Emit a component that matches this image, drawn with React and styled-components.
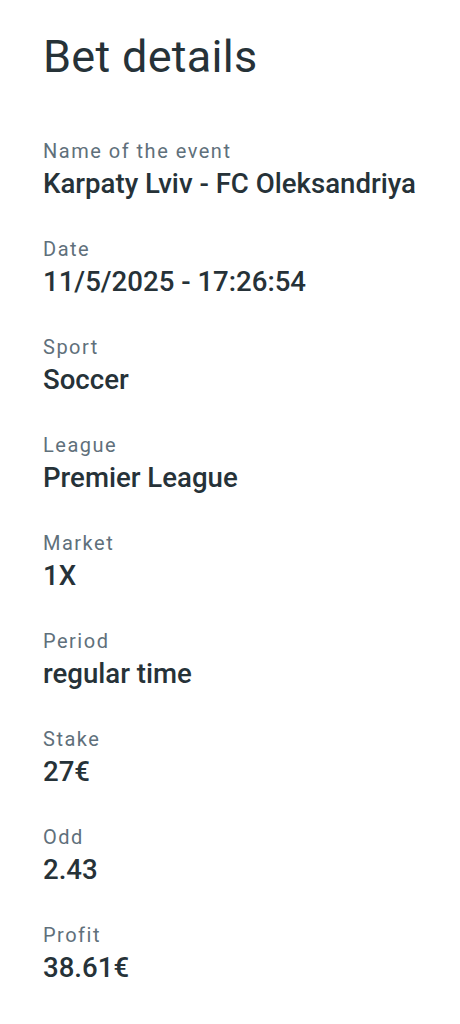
import styled, { createGlobalStyle } from 'styled-components'

const Global = createGlobalStyle`
    body {
        margin: 0;
        background: #fff;
        font-family: Roboto, "Noto Sans", sans-serif;
    }
`;

const Page = styled.main`
    padding: 30px 20px 40px 43px;
`;

const Title = styled.h1`
    margin: 0 0 55px;
    font-size: 45px;
    font-weight: 400;
    line-height: 54px;
    letter-spacing: 0.3px;
    color: #263238;
`;

const List = styled.dl`
    margin: 0;
    display: flex;
    flex-direction: column;
    gap: 32px;
`;

const Item = styled.div`
    display: flex;
    flex-direction: column;
`;

const Label = styled.dt`
    font-size: 20px;
    line-height: 24px;
    letter-spacing: 1.5px;
    color: #5f707b;
`;

const Value = styled.dd`
    margin: 0;
    font-size: 27.6px;
    font-weight: 500;
    line-height: 42px;
    white-space: nowrap;
    color: #263238;
`;

const details = [
    ['Name of the event', 'Karpaty Lviv - FC Oleksandriya'],
    ['Date', '11/5/2025 - 17:26:54'],
    ['Sport', 'Soccer'],
    ['League', 'Premier League'],
    ['Market', '1X'],
    ['Period', 'regular time'],
    ['Stake', '27€'],
    ['Odd', '2.43'],
    ['Profit', '38.61€'],
]

function App(){
    return(
        <Page>
            <Global />
            <Title>Bet details</Title>
            <List>
                {details.map(([label, value]) => (
                    <Item key={label}>
                        <Label>{label}</Label>
                        <Value>{value}</Value>
                    </Item>
                ))}
            </List>
        </Page>
    )
}

export default App
